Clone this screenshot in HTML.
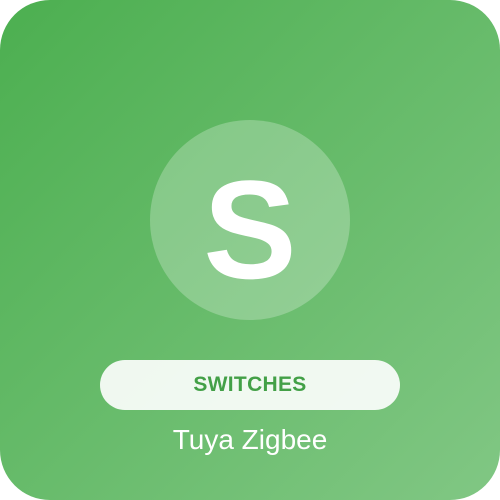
<!DOCTYPE html>
<html><head><style>
html,body{margin:0;padding:0;background:#fff;width:500px;height:500px;overflow:hidden}
.card{position:absolute;left:0;top:0;width:500px;height:500px;border-radius:50px;background:linear-gradient(135deg,#4caf50 0%,#81c784 100%);font-family:"Liberation Sans",sans-serif}
.circle{position:absolute;left:150px;top:120px;width:200px;height:200px;border-radius:50%;background:rgba(255,255,255,0.25)}
.s{position:absolute;left:0;top:130px;width:500px;height:200px;color:#fff;font-weight:bold;font-size:140px;line-height:200px;text-align:center}
.pill{position:absolute;left:100px;top:360px;width:300px;height:50px;border-radius:25px;background:rgba(255,255,255,0.9);color:#43a047;font-weight:bold;font-size:21px;letter-spacing:0.3px;line-height:50px;text-align:center}
.name{position:absolute;left:0;width:500px;top:424px;line-height:32px;text-align:center;color:#fff;font-size:28px}
</style></head><body>
<div class="card">
<div class="circle"></div>
<div class="s">S</div>
<div class="pill">SWITCHES</div>
<div class="name">Tuya Zigbee</div>
</div>
</body></html>
